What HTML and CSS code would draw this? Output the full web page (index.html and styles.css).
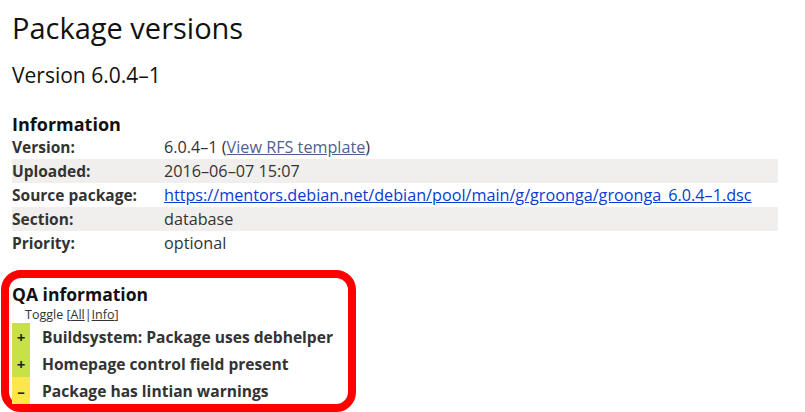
FILE: index.html
```html
<!DOCTYPE html>
<html>
<head>
<meta charset="utf-8">
<link rel="stylesheet" href="styles.css">
</head>
<body>
<h1 class="title">Package versions</h1>
<h2 class="version">Version 6.0.4–1</h2>
<h3 class="section-title">Information</h3>
<table class="info">
  <tr><th>Version:</th><td>6.0.4–1 (<a class="visited" href="#">View RFS template</a>)</td></tr>
  <tr class="alt"><th>Uploaded:</th><td>2016–06–07 15:07</td></tr>
  <tr><th>Source package:</th><td><a class="link" href="#">https://mentors.debian.net/debian/pool/main/g/groonga/groonga_6.0.4–1.dsc</a></td></tr>
  <tr class="alt"><th>Section:</th><td>database</td></tr>
  <tr><th>Priority:</th><td>optional</td></tr>
</table>
<div class="qa-box">
  <h3 class="qa-title">QA information</h3>
  <div class="toggle">Toggle [<a href="#">All</a>|<a href="#">Info</a>]</div>
  <div class="qa-row"><span class="mark ok">+</span><span class="qa-text">Buildsystem: Package uses debhelper</span></div>
  <div class="qa-row"><span class="mark ok">+</span><span class="qa-text">Homepage control field present</span></div>
  <div class="qa-row"><span class="mark warn">–</span><span class="qa-text">Package has lintian warnings</span></div>
</div>
</body>
</html>
```
FILE: styles.css
```css
html, body {
  margin: 0;
  padding: 0;
  background: #fff;
}
body {
  padding: 0 12px;
  font-family: "Open Sans", "Noto Sans", sans-serif;
  color: #222;
  overflow: hidden;
  height: 412px;
}
.title {
  font-size: 29px;
  font-weight: 400;
  color: #111;
  margin: 0;
  padding-top: 10px;
  line-height: 36px;
}
.version {
  font-size: 21px;
  font-weight: 400;
  color: #111;
  margin: 0;
  padding-top: 15px;
  line-height: 28px;
}
.section-title {
  font-size: 18px;
  font-weight: 700;
  color: #111;
  margin: 0;
  padding-top: 24px;
  line-height: 22px;
}
.info {
  border-collapse: collapse;
  width: 766px;
  margin-top: 0;
}
.info th {
  text-align: left;
  font-weight: 700;
  font-size: 15.5px;
  width: 152px;
  padding: 0;
  height: 24px;
  color: #333;
}
.info td {
  padding: 0;
  height: 24px;
  font-size: 16.2px;
  color: #333;
}
.info tr.alt {
  background: #f0efed;
}
.visited {
  color: #4f5f8f;
}
.link {
  color: #0a3bd1;
}
.qa-box {
  margin: 15px 0 0 -11px;
  width: 336px;
  border: 8px solid #ff0000;
  border-radius: 20px;
  padding: 4px 0 0 3px;
}
.qa-title {
  font-size: 17.5px;
  font-weight: 700;
  color: #111;
  margin: 0;
  line-height: 24px;
}
.toggle {
  font-size: 12.5px;
  color: #333;
  padding-left: 13px;
  line-height: 17px;
}
.toggle a {
  color: #333;
}
.qa-row {
  display: flex;
  align-items: center;
  height: 27px;
}
.mark {
  width: 18px;
  height: 100%;
  display: flex;
  align-items: center;
  justify-content: center;
  font-weight: 700;
  font-size: 15px;
  color: #222;
}
.mark.ok {
  background: #c8e147;
}
.mark.warn {
  background: #fbe64c;
}
.qa-text {
  font-size: 15.6px;
  font-weight: 700;
  color: #333;
  padding-left: 12px;
}
```
